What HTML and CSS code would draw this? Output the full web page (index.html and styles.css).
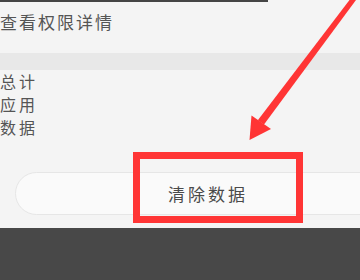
FILE: index.html
```html
<!DOCTYPE html>
<html lang="zh-CN">
<head>
<meta charset="utf-8">
<link rel="stylesheet" href="styles.css">
</head>
<body>
<div class="screen">
  <div class="topbar"></div>
  <div class="header">查看权限详情</div>
  <div class="band"></div>
  <div class="list">
    <div class="item">总计</div>
    <div class="item">应用</div>
    <div class="item">数据</div>
  </div>
  <div class="btn-row">
    <div class="pill">清除数据</div>
  </div>
  <div class="footer"></div>

  <div class="mark-box"></div>
  <svg class="mark-arrow" width="360" height="280" viewBox="0 0 360 280">
    <polygon points="349.5,0 356,0 264,124.6 257.8,120.2" fill="#ff3535"/>
    <polygon points="249.5,140 251.5,115.5 271,129" fill="#ff3535"/>
  </svg>
</div>
</body>
</html>
```
FILE: styles.css
```css
html, body {
  margin: 0;
  padding: 0;
}
body {
  background: #f4f4f4;
  font-family: "Noto Sans CJK SC", "Noto Sans", sans-serif;
  color: #555;
}
.screen {
  position: relative;
  width: 360px;
  height: 280px;
  overflow: hidden;
  display: flex;
  flex-direction: column;
  background: #f4f4f4;
}
.topbar {
  width: 268px;
  height: 2px;
  background: #454545;
  flex: none;
}
.header {
  height: 51px;
  box-sizing: border-box;
  padding-top: 8px;
  font-size: 17px;
  line-height: 24px;
  letter-spacing: 2px;
  flex: none;
}
.band {
  height: 17px;
  background: #e8e8e8;
  flex: none;
}
.list {
  flex: none;
}
.item {
  height: 23px;
  line-height: 23px;
  font-size: 16px;
  letter-spacing: 3px;
}
.btn-row {
  flex: none;
  margin-top: 33px;
  padding-left: 15px;
}
.pill {
  width: 380px;
  height: 43px;
  box-sizing: border-box;
  border: 1px solid #e6e6e6;
  border-radius: 22px 0 0 22px;
  background: #fafafa;
  padding-left: 152px;
  line-height: 41px;
  font-size: 17px;
  letter-spacing: 3px;
  color: #4a4a4a;
}
.footer {
  margin-top: 13px;
  flex: 1;
  background: #484848;
}
.mark-box {
  position: absolute;
  left: 133px;
  top: 152px;
  width: 170px;
  height: 71px;
  box-sizing: border-box;
  border: 7px solid #ff3535;
}
.mark-arrow {
  position: absolute;
  left: 0;
  top: 0;
}
```
